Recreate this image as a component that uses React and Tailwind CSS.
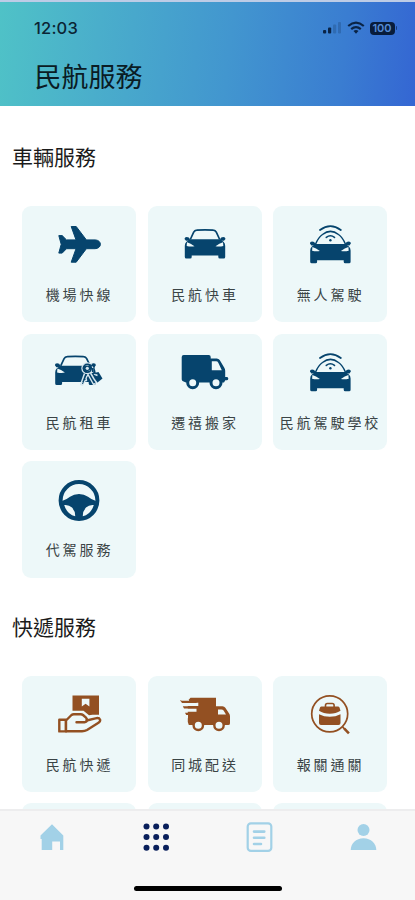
const NAVY = '#06446d';
const BROWN = '#935022';
const SKY = '#a2d1e7';
const TILE = '#edf8f9';

const Icon = ({ color, children }) => (
  <svg width="56" height="48" viewBox="0 0 56 48" fill={color} stroke="none">
    {children}
  </svg>
);

const PlaneIcon = () => (
  <Icon color={NAVY}>
    <path
      d="M7.8 13.6h3.4l4.3 4.3H25L20.2 4.5h5L35.4 17.9H44c3.4 0 5.4 2.2 5.4 4.4s-2 4.4-5.4 4.4h-8.6L25.2 40.2h-5L25 26.7h-9.5l-4.3 4.4H7.8l2.4-8.8z"
      stroke={NAVY}
      strokeWidth="1"
      strokeLinejoin="round"
    />
  </Icon>
);

// Lower half shared by the front-facing cars
const CarBody = () => (
  <>
    <path d="M13 17.3h30l3.500 2.500q1.700 1.600 1.700 4V35q0 1.500-1.500 1.500h-3.900q-1.500 0-1.500-1.500v-1.500H14.700V35q0 1.500-1.500 1.500H9.300Q7.800 36.500 7.800 35V23.800q0-2.400 1.700-4z" />
    <path d="M7.500 16.900q0-2 2.200-2 2.500 0 3.300 2.400l-.8 1.500H9zM48.500 16.900q0-2-2.200-2-2.500 0-3.300 2.400l.8 1.500H47z" />
    <path d="M10 20.200q3.500.8 7.500 4-3.600.8-7.800-.2zM46 20.200q-3.500.8-7.500 4 3.600.8 7.800-.2z" fill={TILE} />
  </>
);

const CarRoof = () => (
  <path
    d="M13.300 17.500 16.700 10.200q1-1.900 3-2 8.300-.6 16.600 0 2 .1 3 2l3.400 7.300"
    fill="none"
    stroke={NAVY}
    strokeWidth="1.700"
  />
);

const CarIcon = () => (
  <Icon color={NAVY}>
    <CarRoof />
    <CarBody />
  </Icon>
);

const SmartCarIcon = () => (
  <Icon color={NAVY}>
    <g transform="translate(.4 4.700)">
      <CarBody />
    </g>
    <g fill="none" stroke={NAVY} strokeWidth="1.500" strokeLinecap="round">
      <path d="M13.500 22.200c2-4.700 4-7.600 7-9.700 5-3.900 11-3.900 16 0 3 2.100 5 5 7 9.700" />
      <path d="M18 8q10.400-7.600 20.800 0" strokeWidth="1.800" />
      <path d="M24.300 15.400q4.100-3.200 8.200 0" strokeWidth="1.600" />
    </g>
    <circle cx="28.400" cy="18.200" r="1.200" />
  </Icon>
);

const RentCarIcon = () => (
  <Icon color={NAVY}>
    <g transform="translate(-3.600 -1.600)">
      <CarRoof />
      <CarBody />
    </g>
    <path d="m43 23 4.500-1 4 6.500-5 4-4-3z" />
    {/* two crossed keys hanging from one ring */}
    <g fill="none" stroke="#d5e6ee" strokeWidth="1.500" strokeLinejoin="round">
      <circle cx="36.300" cy="18.300" r="5.300" />
      <path d="m33.500 23.500-3.800 11 2 .5 1.800-4 2-.5-.5-2.500 2-3.500 5.500 10 2-1" />
      <path d="m39.500 23 3.500 6 2.500 3.500M43 24l3.500 1.500" />
    </g>
    <g fill="none" stroke={NAVY}>
      <circle cx="36.300" cy="18.300" r="3.900" strokeWidth="1.700" />
      <path d="m38.500 14.500 3 1.200 1.500-1.500M43 16v6.500l1.500 1.500M41.500 18v4" strokeWidth="1.200" />
      <path d="M35 24.500 31.500 34" strokeWidth="1" />
    </g>
    <circle cx="36.300" cy="18.300" r="1.600" fill="#d5e6ee" />
  </Icon>
);

const TruckIcon = () => (
  <Icon color={NAVY}>
    <path
      fillRule="evenodd"
      d="M6.700 5h25q2 0 2 2v1.500h6q2 0 3 1.500l4.600 7.800q.9 1.300.9 3V27h1.800q1.300 0 1.300 1.500T50 30.200h-1.700l-1.300 2.400H9L6 31.200q-1.300-.7-1.300-2V7q0-2 2-2zM34.800 11.300v9h10l-3.500-7.600q-.7-1.400-2.200-1.400z"
    />
    <circle cx="15.700" cy="32.700" r="5" fill={TILE} stroke={NAVY} strokeWidth="3" />
    <circle cx="39" cy="32.700" r="5" fill={TILE} stroke={NAVY} strokeWidth="3" />
  </Icon>
);

const WheelIcon = () => (
  <Icon color={NAVY}>
    <circle cx="28" cy="23.500" r="18.400" fill="none" stroke={NAVY} strokeWidth="4" />
    <path d="M11 24q4.500-1.300 8-4.200 3.800-2.800 9-2.800t9 2.800q3.500 2.900 8 4.200L43.500 32 35 41.500H21L12.500 32z" />
    <path d="M13.200 28q4.600-.6 7.800 2.600 3.400 3.600 3.200 8.600-8-1.600-11-11.200zM42.800 28q-4.600-.6-7.800 2.600-3.400 3.600-3.200 8.600 8-1.600 11-11.200z" fill={TILE} />
  </Icon>
);

const HandBoxIcon = () => (
  <Icon color={BROWN}>
    <path d="M21.500 3.500H48v19.300h-6.500l-3.500.5-5.500-4.500h-11z" />
    <path d="M30.800 6.800h7.600v7.800l-3.800-2.800-3.800 2.800z" fill={TILE} />
    <g stroke={BROWN} strokeWidth="2.400" strokeLinejoin="round" fill={TILE}>
      <path d="M15 28.500 20.500 23q1-.8 2.300-.8h7q1.200 0 2.200.8l3 2.600q1.300 1.300.7 2.900l8.800-2.200q3.700-.8 4.600 1.300.5 1.800-2 3.400L36 38q-2.200 1.300-5 1.300H15z" />
      <path d="M8.300 27.700h6.500v11.700H8.300z" />
      <path d="M25.500 30.200h8q2.500-.2 2.200-2" fill="none" strokeLinecap="round" />
    </g>
  </Icon>
);

const FastTruckIcon = () => (
  <Icon color={BROWN}>
    <path
      fillRule="evenodd"
      d="M13.500 5.800H39v8.400h6.500q1.800 0 2.800 1.600l3.800 5.700q.9 1.200.9 2.700v7q0 1.900-1.900 1.900H11.800l-1-3.100V9.200h-7L3.300 8h8.200zM41 17.400v5h8l-2.400-3.800q-.8-1.200-2.300-1.200z"
    />
    <path d="M4 8.300h8v2.300H5zM5.500 10.700h15.800v3.200H7zM6 16.600h13.500v3.200H8zM7.500 22.200H11v4H9.200z" fill={TILE} />
    <path d="M3.700 9h15q1.200 0 1.200 1t-1.200 1H5zM5.800 14.200h13.700q1.200 0 1.200 1.100t-1.200 1.100H7zM8 20.800h9q1.200 0 1.200 1.100T17 23H9.200z" />
    <circle cx="21.300" cy="33.300" r="4.700" fill={TILE} stroke={BROWN} strokeWidth="2.400" />
    <circle cx="42" cy="33.300" r="4.700" fill={TILE} stroke={BROWN} strokeWidth="2.400" />
  </Icon>
);

const InspectIcon = () => (
  <Icon color={BROWN}>
    <circle cx="27.700" cy="21.800" r="18" fill="none" stroke={BROWN} strokeWidth="1.700" />
    <path d="m40.500 34.800 2.500 2.500" stroke={BROWN} strokeWidth="1.700" />
    <path d="m42.300 36.700 4.600 4.700" stroke={BROWN} strokeWidth="2.600" />
    <path d="M23.500 15v-1.700q0-1.800 1.800-1.800h5q1.800 0 1.800 1.800V15" fill="none" stroke={BROWN} strokeWidth="1.600" />
    <path d="M19.500 14.600H36q1 0 1.500 1l1 3.200q-4.500 3-10.700 3T17 18.800l1-3.200q.5-1 1.500-1z" />
    <path d="M17 22.300q5 2.500 10.800 2.500t10.700-2.500V31q0 2-2 2H19q-2 0-2-2z" />
  </Icon>
);

const carServices = [
  { label: '機場快線', icon: PlaneIcon },
  { label: '民航快車', icon: CarIcon },
  { label: '無人駕駛', icon: SmartCarIcon },
  { label: '民航租車', icon: RentCarIcon },
  { label: '遷禧搬家', icon: TruckIcon },
  { label: '民航駕駛學校', icon: SmartCarIcon },
  { label: '代駕服務', icon: WheelIcon },
];

const deliveryServices = [
  { label: '民航快遞', icon: HandBoxIcon },
  { label: '同城配送', icon: FastTruckIcon },
  { label: '報關通關', icon: InspectIcon },
  { label: '' },
  { label: '' },
  { label: '' },
];

const ServiceCard = ({ label, icon: ServiceIcon }) => (
  <div className="flex h-[116.200px] flex-col items-center rounded-[9px] bg-[#edf8f9] pt-4">
    {ServiceIcon && <ServiceIcon />}
    <span className="mt-[14px] whitespace-nowrap pl-px text-[14px] font-normal leading-5 tracking-[2.900px] text-[#3a4446]">
      {label}
    </span>
  </div>
);

const ServiceSection = ({ title, items }) => (
  <section>
    <h2 className="pl-3 text-[21px] font-normal leading-8 text-[#1b1b1b]">{title}</h2>
    <div className="mt-[34px] grid grid-cols-3 gap-x-[11.500px] gap-y-[11.500px] pl-[22px] pr-7">
      {items.map((item, i) => (
        <ServiceCard key={i} {...item} />
      ))}
    </div>
  </section>
);

const StatusBar = () => (
  <div className="flex h-4 items-center justify-between pl-[34px] pr-[18px]">
    <span className="font-[Inter] text-[16.500px] font-medium leading-4 tracking-[0.200px] text-[#0b2534]">12:03</span>
    <div className="flex items-center">
      <svg width="18" height="14" viewBox="0 0 18 14" fill="#0a2446">
        <rect y="9" width="3.200" height="3.500" rx="1" />
        <rect x="5" y="6.500" width="3.200" height="6" rx="1" />
        <rect x="10" y="3.500" width="3.200" height="9" rx="1" opacity=".22" />
        <rect x="15" y="1" width="3" height="11.500" rx="1" opacity=".22" />
      </svg>
      <svg className="ml-[6px]" width="18" height="14" viewBox="0 0 18 14" fill="none" stroke="#0a2446" strokeWidth="2.200">
        <path d="M1.200 5Q9-1.600 16.800 5M4.200 8.100q4.800-4 9.600 0" />
        <path d="M6.500 10q2.500-1.900 5 0L9 12.700z" fill="#0a2446" stroke="none" />
      </svg>
      <div className="ml-[5px] flex h-[13px] w-[25px] items-center justify-center rounded-[4px] bg-[#081c3b] font-[Inter] text-[11px] font-semibold leading-[13px] text-[#548bd6]">
        100
      </div>
      <div className="ml-px h-1 w-[1.500px] rounded-r-full bg-[#173b78]" />
    </div>
  </div>
);

const BottomNav = () => (
  <nav className="flex h-[91px] shrink-0 flex-col items-center border-t-2 border-[#ededee] bg-[#f7f7f7]">
    <div className="flex h-[52px] w-full items-center">
      <button className="flex flex-1 justify-center">
        <svg width="32" height="32" viewBox="0 0 32 32" fill={SKY}>
          <path d="M16 3.300 27.300 14.600v14.500H24V20.600h-7.800v8.500H5.700v-11H4.500v-3.500z" />
        </svg>
      </button>
      <button className="flex flex-1 justify-center">
        <svg width="32" height="32" viewBox="0 0 32 32" fill="#091f5b">
          {[5.4, 16.1, 26.8].map((y) =>
            [6.5, 16.2, 26].map((x) => <circle key={`${x}-${y}`} cx={x} cy={y} r="3" />)
          )}
        </svg>
      </button>
      <button className="flex flex-1 justify-center">
        <svg width="32" height="32" viewBox="0 0 32 32" fill="none" stroke={SKY} strokeWidth="2.200">
          <rect x="4.700" y="2.300" width="23.600" height="27.600" rx="3.200" />
          <path d="M11 10.600h10.300M11 16.800h10.300M11 23h7" strokeWidth="2.600" strokeLinecap="round" />
        </svg>
      </button>
      <button className="flex flex-1 justify-center">
        <svg width="32" height="32" viewBox="0 0 32 32" fill={SKY}>
          <circle cx="16.500" cy="8.900" r="6" />
          <path d="M3.700 29c0-6.500 5.200-11.800 12.800-11.800S29.300 22.500 29.300 29z" />
        </svg>
      </button>
    </div>
    <div className="mt-[22.500px] h-[5.500px] w-[148px] rounded-full bg-black" />
  </nav>
);

export default function App() {
  return (
    <div className="flex h-[900px] w-full flex-col overflow-hidden bg-white font-['Noto_Sans_CJK_TC','Liberation_Sans',sans-serif]">
      <header className="h-[106px] shrink-0 border-t-2 border-[#bdcce6] bg-[linear-gradient(96deg,#4fc2c7_0%,#4aaecb_24%,#4296cf_55%,#3a7dd1_82%,#3466d3_100%)] pt-[18px]">
        <StatusBar />
        <h1 className="mt-5 pl-[34.500px] text-[27px] font-normal leading-10 text-[#0a1c25]">民航服務</h1>
      </header>
      <main className="min-h-0 flex-1 overflow-hidden pt-[34px]">
        <ServiceSection title="車輛服務" items={carServices} />
        <div className="h-8" />
        <ServiceSection title="快遞服務" items={deliveryServices} />
      </main>
      <BottomNav />
    </div>
  );
}
